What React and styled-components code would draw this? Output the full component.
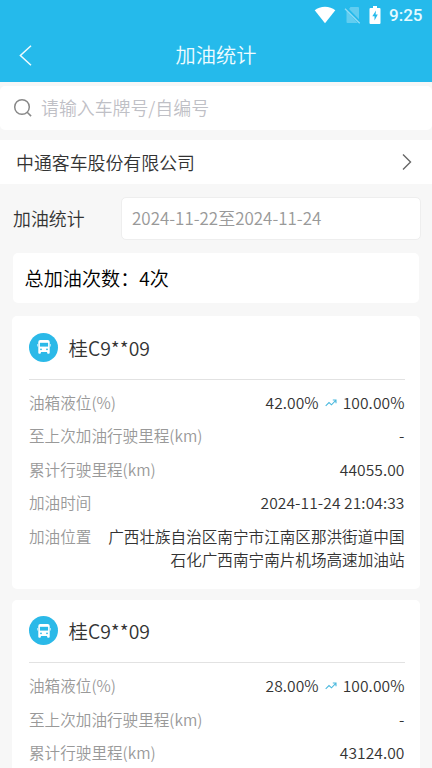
import React from "react";
import styled, { createGlobalStyle } from "styled-components";

const GlobalStyle = createGlobalStyle`
  * {
    box-sizing: border-box;
  }
  body {
    margin: 0;
    background-color: #f7f7f7;
    font-family: "Noto Sans CJK SC", "Noto Sans", sans-serif;
    font-weight: 350;
    color: #333;
  }
`;

const Page = styled.div`
  width: 432px;
  height: 768px;
  overflow: hidden;
  background-color: #f7f7f7;
`;

const Header = styled.header`
  height: 81.5px;
  background-color: #25baeb;
  color: #fff;
`;

const StatusBar = styled.div`
  display: flex;
  align-items: center;
  justify-content: flex-end;
  gap: 8px;
  height: 29px;
  padding-right: 9.5px;
  font: 500 17px/29px Roboto, sans-serif;
  svg {
    display: block;
  }
`;

const Clock = styled.span`
  padding-top: 1px;
  color: #e4fbff;
`;

const Navbar = styled.nav`
  display: grid;
  grid-template-columns: 60px 1fr 60px;
  align-items: center;
  height: 52px;
  svg {
    display: block;
    margin-left: 18px;
  }
`;

const Title = styled.h1`
  margin: 0;
  padding-bottom: 1px;
  font-size: 20.2px;
  font-weight: 350;
  line-height: 50px;
  text-align: center;
  color: #effcff;
`;

const Search = styled.div`
  display: flex;
  align-items: center;
  height: 43.5px;
  margin-top: 4.5px;
  padding-left: 13px;
  border-radius: 5px;
  background-color: #fff;
  color: #bfc0c6;
  font-size: 17.9px;
  line-height: 42px;
  svg {
    margin-right: 8px;
  }
`;

const SearchHint = styled.span`
  padding-bottom: 1px;
`;

const Company = styled.div`
  display: flex;
  align-items: center;
  justify-content: space-between;
  height: 44px;
  margin-top: 10.5px;
  padding: 0 20px 0 16px;
  background-color: #fff;
  font-size: 17.9px;
`;

const Filter = styled.div`
  display: flex;
  align-items: center;
  justify-content: space-between;
  margin-top: 13px;
  padding: 0 11px 0 13px;
  font-size: 17.9px;
`;

const FilterLabel = styled.span`
  padding-bottom: 2px;
`;

const DateRange = styled.div`
  width: 300.5px;
  height: 43px;
  padding-left: 10.5px;
  border: 1px solid #eee;
  border-radius: 5px;
  background-color: #fff;
  color: #999;
  font-size: 16.98px;
  line-height: 40px;
`;

const Total = styled.div`
  height: 50px;
  margin: 13px 13px 0;
  padding-left: 11.5px;
  border-radius: 5px;
  background-color: #fff;
  color: #000;
  font-size: 19.15px;
  line-height: 50px;
`;

const Card = styled.section`
  height: 272.5px;
  margin: ${(props) => (props.$first ? "13px" : "11px")} 12px 0;
  padding: 0 15.5px 0 17px;
  border-radius: 5px;
  background-color: #fff;
`;

const CardHead = styled.div`
  display: flex;
  align-items: center;
  height: 63.5px;
  border-bottom: 1px solid #e2e2e2;
  font-size: 19.4px;
`;

const Badge = styled.div`
  display: flex;
  align-items: center;
  justify-content: center;
  width: 29px;
  height: 29px;
  margin-right: 10.5px;
  border-radius: 50%;
  background-color: #2bb9e8;
`;

const Rows = styled.div`
  display: flex;
  flex-direction: column;
  gap: 10.6px;
  padding-top: 11px;
`;

const Row = styled.div`
  display: flex;
  justify-content: space-between;
  font-size: 15.6px;
  line-height: 23px;
`;

const Label = styled.span`
  flex: none;
  color: #999;
`;

const Value = styled.span`
  width: ${(props) => (props.$wide ? "298px" : "auto")};
  letter-spacing: ${(props) => (props.$wide ? "0" : "0.08px")};
  text-align: right;
  svg {
    margin: 0 6px 3px;
    vertical-align: middle;
  }
`;

const records = [
  {
    plate: "桂C9**09",
    before: "42.00%",
    after: "100.00%",
    trip: "-",
    mileage: "44055.00",
    time: "2024-11-24 21:04:33",
    place: "广西壮族自治区南宁市江南区那洪街道中国石化广西南宁南片机场高速加油站",
  },
  {
    plate: "桂C9**09",
    before: "28.00%",
    after: "100.00%",
    trip: "-",
    mileage: "43124.00",
    time: "",
    place: "",
  },
];

function WifiIcon() {
  return (
    <svg width="22" height="18" viewBox="0 0 22 18" fill="#fff">
      <path d="M11 17.2.7 4.300C3.500 1.900 7 .7 11 .7s7.500 1.200 10.300 3.600z" />
    </svg>
  );
}

function NoSimIcon() {
  return (
    <svg width="17" height="18" viewBox="0 0 17 18">
      <path d="M6.500 1H14q1 0 1 1v11.300L5 3z" fill="#fff" opacity=".28" />
      <path d="M2.500 5v11q0 1 1 1h10.300z" fill="#fff" opacity=".28" />
      <path d="M1 2.700 15.700 17.300" stroke="#fff" strokeWidth="1.200" opacity=".5" />
    </svg>
  );
}

function BatteryIcon() {
  return (
    <svg width="12" height="18" viewBox="0 0 12 18">
      <path d="M4 0h4v2h2.500q1 0 1 1v14q0 1-1 1h-9q-1 0-1-1V3q0-1 1-1H4z" fill="#fff" />
      <path d="M7 4.500 3.300 10.300h2.200v4.200l3.300-5.900H6.600z" fill="#25baeb" />
    </svg>
  );
}

function BackIcon() {
  return (
    <svg width="15" height="23" viewBox="0 0 15 23" fill="none" stroke="#effcff" strokeWidth="1.500">
      <path d="M13 1.700 2.400 11.500 13 21.300" />
    </svg>
  );
}

function SearchIcon() {
  return (
    <svg width="20" height="20" viewBox="0 0 20 20" fill="none" stroke="#888" strokeWidth="1.500">
      <circle cx="9" cy="9" r="7.300" />
      <path d="m14.200 14.200 3.900 3.900" />
    </svg>
  );
}

function ArrowIcon() {
  return (
    <svg width="10" height="18" viewBox="0 0 10 18" fill="none" stroke="#666" strokeWidth="1.400">
      <path d="m1 1.500 7.500 7.500L1 16.500" />
    </svg>
  );
}

function BusIcon() {
  return (
    <svg width="14" height="16" viewBox="0 0 14 16">
      <path
        d="M3.300 1h7.400q2 0 2 2v10.800q0 1-1 1h-.6q-1 0-1-1v-.8H3.900v.8q0 1-1 1h-.6q-1 0-1-1V3q0-2 2-2z"
        fill="#fff"
      />
      <path d="M.6 5v2.500M13.400 5v2.500" stroke="#d7f4fd" strokeWidth=".8" />
      <path d="M2.900 3.800h8.200v3.800H2.900z" fill="#2bb9e8" />
      <circle cx="4" cy="10.300" r=".9" fill="#2bb9e8" />
      <circle cx="10" cy="10.300" r=".9" fill="#2bb9e8" />
    </svg>
  );
}

function TrendIcon() {
  return (
    <svg width="12" height="8" viewBox="0 0 12 8" fill="none" stroke="#4bb9de" strokeWidth="1.100">
      <path d="m.7 6.800 3.300-3.300 2.500 2.300 4.500-4.600M7.800 1H11v3.200" />
    </svg>
  );
}

function Record({ item, first }) {
  return (
    <Card $first={first}>
      <CardHead>
        <Badge>
          <BusIcon />
        </Badge>
        {item.plate}
      </CardHead>
      <Rows>
        <Row>
          <Label>油箱液位(%)</Label>
          <Value>
            {item.before}
            <TrendIcon />
            {item.after}
          </Value>
        </Row>
        <Row>
          <Label>至上次加油行驶里程(km)</Label>
          <Value>{item.trip}</Value>
        </Row>
        <Row>
          <Label>累计行驶里程(km)</Label>
          <Value>{item.mileage}</Value>
        </Row>
        {item.time && (
          <Row>
            <Label>加油时间</Label>
            <Value>{item.time}</Value>
          </Row>
        )}
        {item.place && (
          <Row>
            <Label>加油位置</Label>
            <Value $wide>{item.place}</Value>
          </Row>
        )}
      </Rows>
    </Card>
  );
}

function App() {
  return (
    <Page>
      <GlobalStyle />
      <Header>
        <StatusBar>
          <WifiIcon />
          <NoSimIcon />
          <BatteryIcon />
          <Clock>9:25</Clock>
        </StatusBar>
        <Navbar>
          <BackIcon />
          <Title>加油统计</Title>
        </Navbar>
      </Header>
      <Search>
        <SearchIcon />
        <SearchHint>请输入车牌号/自编号</SearchHint>
      </Search>
      <Company>
        中通客车股份有限公司
        <ArrowIcon />
      </Company>
      <Filter>
        <FilterLabel>加油统计</FilterLabel>
        <DateRange>2024-11-22至2024-11-24</DateRange>
      </Filter>
      <Total>总加油次数：4次</Total>
      {records.map((item, i) => (
        <Record key={i} item={item} first={i === 0} />
      ))}
    </Page>
  );
}

export default App;
